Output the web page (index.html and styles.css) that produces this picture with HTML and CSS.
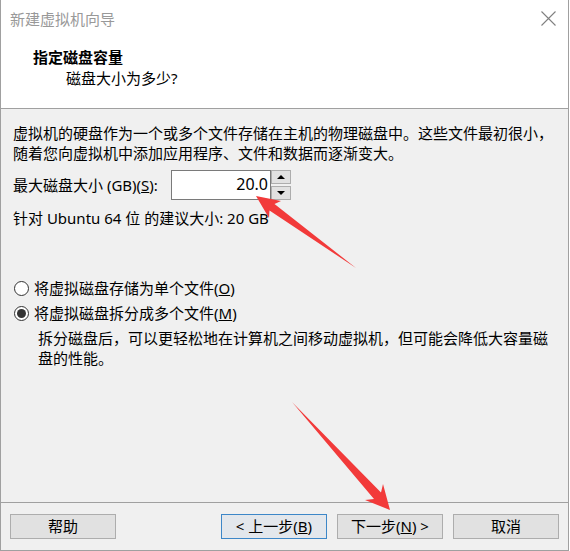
FILE: index.html
```html
<!DOCTYPE html>
<html lang="zh-CN">
<head>
<meta charset="utf-8">
<title>新建虚拟机向导</title>
<link rel="stylesheet" href="styles.css">
</head>
<body>
<div class="window">
  <div class="titlebar">
    <span class="title">新建虚拟机向导</span>
    <svg class="close" width="15" height="15" viewBox="0 0 15 15"><path d="M0.5 0.5 L14.5 14.5 M14.5 0.5 L0.5 14.5" stroke="#808080" stroke-width="1.1" fill="none"/></svg>
  </div>
  <div class="header">
    <div class="h-title">指定磁盘容量</div>
    <div class="h-sub">磁盘大小为多少?</div>
  </div>
  <div class="main">
    <p class="intro">虚拟机的硬盘作为一个或多个文件存储在主机的物理磁盘中。这些文件最初很小，<br>随着您向虚拟机中添加应用程序、文件和数据而逐渐变大。</p>
    <div class="size-row">
      <span class="size-label">最大磁盘大小 (GB)(<u>S</u>):</span>
      <div class="spin-input">20.0</div>
      <div class="spinner">
        <div class="spin-btn"><span class="tri-up"></span></div>
        <div class="spin-btn"><span class="tri-down"></span></div>
      </div>
    </div>
    <p class="recommend">针对 Ubuntu 64 位 的建议大小: 20 GB</p>
    <div class="radios">
      <div class="radio-row"><span class="radio"></span>将虚拟磁盘存储为单个文件(<u>O</u>)</div>
      <div class="radio-row"><span class="radio checked"></span>将虚拟磁盘拆分成多个文件(<u>M</u>)</div>
      <p class="desc">拆分磁盘后，可以更轻松地在计算机之间移动虚拟机，但可能会降低大容量磁<br>盘的性能。</p>
    </div>
  </div>
  <div class="footer">
    <button class="btn">帮助</button>
    <button class="btn btn-default push">&lt; 上一步(<u>B</u>)</button>
    <button class="btn">下一步(<u>N</u>) &gt;</button>
    <button class="btn">取消</button>
  </div>
  <svg class="arrows" width="569" height="551" viewBox="0 0 569 551">
    <polygon fill="#f23a3a" points="256,196 281,201 274.5,204 356,268 269.5,210.5 269,218"/>
    <polygon fill="#f23a3a" points="390,510 383,484 381,492.5 292,402 374,499 365,500"/>
  </svg>
</div>
</body>
</html>
```

FILE: styles.css
```css
* { box-sizing: border-box; }
html, body { margin: 0; padding: 0; background: #ffffff; }
body {
  font-family: "Noto Sans", "Noto Sans CJK SC", sans-serif;
  font-size: 15px;
  color: #000;
}
.window {
  position: relative;
  width: 569px;
  height: 551px;
  border: 1px solid #a0a0a0;
  border-top: none;
  display: flex;
  flex-direction: column;
  background: #f0f0f0;
}
.titlebar {
  height: 38px;
  background: #fff;
  display: flex;
  align-items: center;
  justify-content: space-between;
  padding: 0 12px 0 9px;
}
.title {
  color: #999;
  line-height: 20px;
}
.close { display: block; margin-top: -1px; }
.header {
  background: #fff;
  padding: 9px 0 20px 32px;
  border-bottom: 1px solid #a0a0a0;
}
.h-title {
  font-weight: bold;
  line-height: 20px;
  margin-bottom: 1px;
}
.h-sub {
  line-height: 20px;
  padding-left: 33px;
}
.main {
  flex: 1;
  padding: 14px 0 0 12px;
}
.intro {
  margin: 0;
  line-height: 20px;
}
.size-row {
  margin-top: 7px;
  display: flex;
  align-items: center;
  height: 30px;
}
.size-label {
  width: 158px;
  line-height: 20px;
}
.spin-input {
  width: 100px;
  height: 30px;
  background: #fff;
  border: 1px solid #7a7a7a;
  text-align: right;
  padding-right: 2px;
  line-height: 27px;
  font-size: 16px;
}
.spinner {
  width: 20px;
  height: 30px;
  display: flex;
  flex-direction: column;
  justify-content: space-between;
}
.spin-btn {
  height: 14px;
  background: #e1e1e1;
  border: 1px solid #adadad;
  display: flex;
  align-items: center;
  justify-content: center;
}
.tri-up, .tri-down {
  width: 0;
  height: 0;
  border-left: 4px solid transparent;
  border-right: 4px solid transparent;
}
.tri-up { border-bottom: 4px solid #000; }
.tri-down { border-top: 4px solid #000; }
.recommend {
  margin: 8px 0 0 0;
  line-height: 20px;
}
.radios { margin-top: 50px; }
.radio-row {
  display: flex;
  align-items: center;
  line-height: 20px;
  margin-bottom: 5px;
}
.radio {
  width: 15px;
  height: 15px;
  border: 1px solid #333;
  border-radius: 50%;
  background: #fff;
  margin: 0 5px 0 1px;
  display: flex;
  align-items: center;
  justify-content: center;
}
.radio.checked::after {
  content: "";
  width: 9px;
  height: 9px;
  border-radius: 50%;
  background: #333;
}
.desc {
  margin: 6px 0 0 25px;
  line-height: 19.5px;
}
.footer {
  border-top: 1px solid #a0a0a0;
  padding: 11px 9px 11px 9px;
  display: flex;
  gap: 10px;
}
.btn {
  width: 106px;
  height: 25px;
  background: #e1e1e1;
  border: 1px solid #adadad;
  font-family: inherit;
  font-size: 15px;
  padding: 0;
  line-height: 21px;
  color: #000;
}
.btn-default {
  border-color: #3d87c8;
  background: #e3e7ec;
}
.push { margin-left: auto; }
.arrows {
  position: absolute;
  left: -1px;
  top: 0;
  pointer-events: none;
}
```
